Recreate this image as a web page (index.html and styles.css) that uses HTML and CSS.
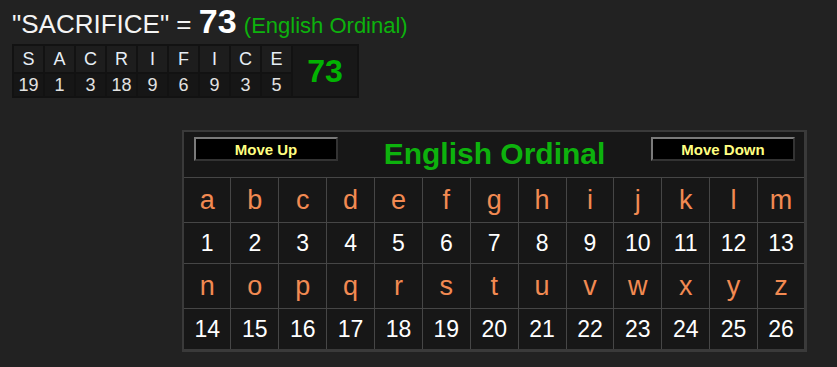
FILE: index.html
```html
<!DOCTYPE html>
<html lang="en">
<head>
  <meta charset="UTF-8" />
  <meta name="viewport" content="width=device-width, initial-scale=1" />
  <title>Gematria - SACRIFICE</title>
  <link rel="stylesheet" href="styles.css">
</head>
<body>
  <div class="page">
    <div class="result">"SACRIFICE" = <span class="total">73</span> <span class="cipher">(English Ordinal)</span></div>

    <table class="breakdown">
      <tr class="chars">
        <td>S</td><td>A</td><td>C</td><td>R</td><td>I</td><td>F</td><td>I</td><td>C</td><td>E</td>
        <td class="sum" rowspan="2">73</td>
      </tr>
      <tr class="vals">
        <td>19</td><td>1</td><td>3</td><td>18</td><td>9</td><td>6</td><td>9</td><td>3</td><td>5</td>
      </tr>
    </table>

    <table class="chart">
      <tr>
        <th colspan="13">
          <div class="chart-head">
            <button>Move Up</button>
            <span class="chart-title">English Ordinal</span>
            <button>Move Down</button>
          </div>
        </th>
      </tr>
      <tr class="letters">
        <td>a</td><td>b</td><td>c</td><td>d</td><td>e</td><td>f</td><td>g</td><td>h</td><td>i</td><td>j</td><td>k</td><td>l</td><td>m</td>
      </tr>
      <tr class="nums">
        <td>1</td><td>2</td><td>3</td><td>4</td><td>5</td><td>6</td><td>7</td><td>8</td><td>9</td><td>10</td><td>11</td><td>12</td><td>13</td>
      </tr>
      <tr class="letters">
        <td>n</td><td>o</td><td>p</td><td>q</td><td>r</td><td>s</td><td>t</td><td>u</td><td>v</td><td>w</td><td>x</td><td>y</td><td>z</td>
      </tr>
      <tr class="nums">
        <td>14</td><td>15</td><td>16</td><td>17</td><td>18</td><td>19</td><td>20</td><td>21</td><td>22</td><td>23</td><td>24</td><td>25</td><td>26</td>
      </tr>
    </table>
  </div>
</body>
</html>
```

FILE: styles.css
```css
body {
  margin: 0;
  background-color: #222;
  color: #fff;
  font-family: 'Liberation Sans', Arial, sans-serif;
}
.page {
  padding: 0 12px;
}

/* phrase = total line */
.result {
  font-size: 26px;
  line-height: 30px;
  padding-top: 4px;
  height: 36px;
  color: #f4f4f4;
}
.result .total {
  font-size: 34px;
  font-weight: bold;
  color: #fff;
  line-height: 1;
}
.result .cipher {
  font-size: 22px;
  color: #0db20d;
  line-height: 1;
}

/* letter-by-letter breakdown */
.breakdown {
  margin-top: 4px;
  background-color: #121212;
  border-spacing: 2px;
}
.breakdown td {
  width: 29px;
  padding: 0;
  text-align: center;
  font-size: 18px;
}
.breakdown .chars td {
  height: 26px;
  background-color: #1d1d1d;
  color: #e6eef6;
}
.breakdown .vals td {
  height: 22px;
  background-color: #161616;
  color: #e2e2e2;
}
.breakdown td.sum {
  width: 64px;
  background-color: #181818;
  color: #02b302;
  font-size: 32px;
  font-weight: bold;
}

/* cipher chart */
.chart {
  margin: 32px 0 0 170px;
  width: 625px;
  table-layout: fixed;
  border-collapse: collapse;
  background-color: #171717;
  border: 2px solid #3a3a3a;
  border-right-width: 3px;
  border-bottom-width: 3px;
}
.chart th {
  padding: 0;
  border-bottom: 1px solid #464646;
}
.chart-head {
  box-sizing: border-box;
  height: 45px;
  padding: 5px 9px 0 10px;
  display: flex;
  justify-content: space-between;
  align-items: flex-start;
}
.chart-head button {
  width: 144px;
  height: 24px;
  padding: 0;
  background-color: #000;
  color: #ffff80;
  font-family: 'Liberation Sans', Arial, sans-serif;
  font-weight: bold;
  font-size: 15px;
  border: 2px solid;
  border-color: #7a7a7a #333 #333 #7a7a7a;
  cursor: pointer;
}
.chart-title {
  font-size: 30px;
  line-height: 34px;
  font-weight: bold;
  color: #0db20d;
}
.chart td {
  padding: 0;
  text-align: center;
  border: 1px solid #464646;
}
.chart .letters td {
  height: 44px;
  font-size: 27px;
  color: #f28a52;
}
.chart .nums td {
  height: 40px;
  font-size: 23px;
  color: #fff;
}
```
